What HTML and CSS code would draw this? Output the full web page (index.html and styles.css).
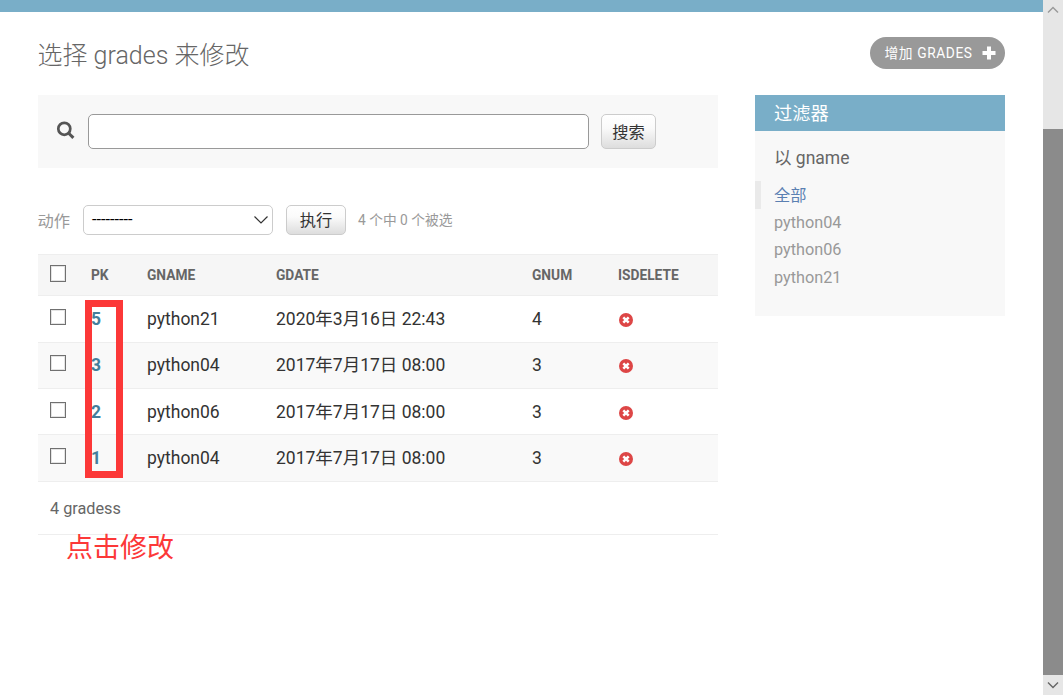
FILE: index.html
```html
<!DOCTYPE html>
<html lang="zh-Hans">
<head>
  <meta charset="UTF-8" />
  <title>选择 grades 来修改</title>
  <link rel="stylesheet" href="styles.css">
</head>
<body>
  <svg class="sprite">
    <symbol id="icon-no" viewBox="0 0 14 14">
      <circle cx="7" cy="7" r="7" fill="#dd4646"/>
      <path d="M4.3 4.3l5.4 5.4M9.7 4.3l-5.4 5.4" stroke="#fff" stroke-width="2.5"/>
    </symbol>
  </svg>
  <div class="page">
    <div class="main">
      <div class="breadcrumbs"></div>
      <div class="content">
        <div class="title-bar">
          <h1>选择 grades 来修改</h1>
          <a class="addlink">增加 GRADES
            <svg width="14" height="14" viewBox="0 0 14 14"><path d="M7 .5v13M.5 7h13" stroke="#fff" stroke-width="4"/></svg>
          </a>
        </div>
        <div class="columns">
          <div class="changelist">
            <form class="toolbar">
              <svg class="search-icon" width="20" height="20" viewBox="0 0 20 20" fill="none" stroke="#555">
                <circle cx="8.3" cy="7.8" r="6" stroke-width="2.7"/>
                <path d="M12.7 12.2l4.700 4.700" stroke-width="3"/>
              </svg>
              <input type="text" class="searchbar">
              <button type="button" class="button search-button">搜索</button>
            </form>
            <div class="actions">
              <label>动作</label>
              <div class="select">
                <span>---------</span>
                <svg width="16" height="10" viewBox="0 0 16 10"><path d="M1.5 1.5L8 8l6.500-6.500" fill="none" stroke="#333" stroke-width="1.2"/></svg>
              </div>
              <button type="button" class="button go-button">执行</button>
              <span class="counter">4 个中 0 个被选</span>
            </div>
            <div class="results">
              <div class="row head">
                <span><input type="checkbox"></span><span>PK</span><span>GNAME</span><span>GDATE</span><span>GNUM</span><span>ISDELETE</span>
              </div>
              <div class="row tall">
                <span><input type="checkbox"></span><a>5</a><span>python21</span><span class="date">2020年3月16日 22:43</span><span>4</span><span><svg class="no"><use href="#icon-no"/></svg></span>
              </div>
              <div class="row alt">
                <span><input type="checkbox"></span><a>3</a><span>python04</span><span class="date">2017年7月17日 08:00</span><span>3</span><span><svg class="no"><use href="#icon-no"/></svg></span>
              </div>
              <div class="row">
                <span><input type="checkbox"></span><a>2</a><span>python06</span><span class="date">2017年7月17日 08:00</span><span>3</span><span><svg class="no"><use href="#icon-no"/></svg></span>
              </div>
              <div class="row alt tall">
                <span><input type="checkbox"></span><a>1</a><span>python04</span><span class="date">2017年7月17日 08:00</span><span>3</span><span><svg class="no"><use href="#icon-no"/></svg></span>
              </div>
              <div class="mark-box"></div>
            </div>
            <div class="paginator">4 gradess
              <div class="mark-text">点击修改</div>
            </div>
          </div>
          <div class="filter">
            <h2>过滤器</h2>
            <h3>以 gname</h3>
            <ul>
              <li class="selected">全部</li>
              <li>python04</li>
              <li>python06</li>
              <li>python21</li>
            </ul>
          </div>
        </div>
      </div>
    </div>
    <div class="scrollbar">
      <svg class="arrow-up" width="12" height="8" viewBox="0 0 12 8"><path d="M1 6.500l5-5 5 5" fill="none" stroke="#999" stroke-width="1.4"/></svg>
      <div class="thumb"></div>
      <svg class="arrow-down" width="12" height="8" viewBox="0 0 12 8"><path d="M1 1.500l5 5 5-5" fill="none" stroke="#666" stroke-width="1.4"/></svg>
    </div>
  </div>
</body>
</html>
```

FILE: styles.css
```css
* {
  box-sizing: border-box;
}
body {
  margin: 0;
  font-family: Roboto, "Noto Sans CJK SC", sans-serif;
  font-size: 17.5px;
  color: #333;
  background: #fff;
}
.sprite {
  display: none;
}
.page {
  display: flex;
  height: 695px;
  overflow: hidden;
}
.main {
  flex: 1;
}
.breadcrumbs {
  height: 12px;
  background: #79aec8;
}
.content {
  padding: 25px 38px;
}
.title-bar {
  display: flex;
  justify-content: space-between;
  height: 58px;
}
h1 {
  margin: 0 0 0 -0.5px;
  font-size: 25px;
  font-weight: 300;
  line-height: 37px;
  color: #666;
}
.addlink {
  display: flex;
  align-items: center;
  justify-content: space-between;
  width: 135px;
  height: 32px;
  padding: 0 9px 1px 14.5px;
  border-radius: 16px;
  background: #999;
  color: #fff;
  font-size: 13.75px;
  line-height: 30px;
  letter-spacing: 0.6px;
  white-space: nowrap;
}
.columns {
  display: flex;
  justify-content: space-between;
  align-items: flex-start;
}
.changelist {
  width: 680px;
}
.toolbar {
  display: flex;
  align-items: center;
  height: 73px;
  padding-left: 18px;
  background: #f8f8f8;
}
.search-icon {
  margin: -1px 12px 0 0;
}
.searchbar {
  width: 501px;
  height: 35px;
  border: 1px solid #999;
  border-radius: 5px;
  background: #fff;
}
.button {
  border: 1px solid #ccc;
  border-radius: 5px;
  background: linear-gradient(#fff, #fafafa 40%, #ddd);
  color: #333;
  padding: 0 0 2px;
  font-family: inherit;
  font-size: 16.25px;
}
.search-button {
  width: 55px;
  height: 35px;
  margin-left: 12px;
}
.actions {
  display: flex;
  align-items: center;
  height: 30px;
  margin: 37px 0 19px;
  color: #999;
  font-size: 16.25px;
}
.actions label {
  width: 32px;
  margin: -1px 0 0 -0.5px;
  white-space: nowrap;
}
.select {
  display: flex;
  justify-content: space-between;
  width: 190px;
  height: 30px;
  margin-left: 13.5px;
  padding: 0 3px 0 8px;
  border: 1px solid #ccc;
  border-radius: 5px;
  color: #000;
  line-height: 27px;
}
.select svg {
  margin-top: 9px;
}
.go-button {
  width: 60px;
  height: 30px;
  margin: 0 12px 0 13px;
}
.counter {
  margin-top: -2px;
  font-size: 13.75px;
}
.results {
  position: relative;
  border-top: 1px solid #eee;
}
.row {
  display: grid;
  grid-template-columns: 41px 56px 129px 256px 86px 1fr;
  align-items: center;
  height: 46px;
  padding-left: 12px;
  border-bottom: 1px solid #eee;
  white-space: nowrap;
}
.row.tall {
  height: 47px;
}
.row.head {
  height: 41px;
  background: #f6f6f6;
  color: #666;
  font-size: 13.75px;
  font-weight: 700;
}
.row.alt {
  padding-bottom: 1px;
  background: #f9f9f9;
}
.row a {
  color: #447e9b;
  font-weight: 700;
}
.row .date {
  margin-top: -3px;
}
input[type="checkbox"] {
  appearance: none;
  display: block;
  width: 16px;
  height: 16px;
  margin: -4px 0 0;
  border: 1px solid #707070;
  background: #fff;
  box-shadow: inset 0 0 0 1px #e4e4e4;
}
.head input[type="checkbox"] {
  height: 17px;
  margin-top: -3px;
}
.no {
  display: block;
  width: 14px;
  height: 14px;
  margin: 2px 0 0 0.7px;
}
.mark-box {
  position: absolute;
  left: 47px;
  top: 45px;
  width: 38px;
  height: 178px;
  border: 7px solid #fc3838;
}
.paginator {
  position: relative;
  height: 53px;
  padding-left: 12px;
  border-bottom: 1px solid #eee;
  color: #666;
  font-size: 16.25px;
  line-height: 53px;
}
.mark-text {
  position: absolute;
  left: 28px;
  top: 46px;
  color: #fc3838;
  font-size: 27px;
  line-height: 40px;
}
.filter {
  width: 250px;
  height: 221px;
  background: #f8f8f8;
}
.filter h2 {
  height: 36px;
  margin: 0;
  padding-left: 19px;
  background: #79aec8;
  color: #fff;
  font-size: 18.2px;
  font-weight: 400;
  line-height: 38px;
}
.filter h3 {
  margin: 12px 0 8px;
  padding-left: 19px;
  color: #666;
  font-size: 17.5px;
  font-weight: 400;
  line-height: 30px;
}
.filter ul {
  margin: 0;
  padding: 0;
  list-style: none;
}
.filter li {
  height: 27.5px;
  padding-left: 19px;
  color: #999;
  font-size: 16.25px;
  line-height: 27.5px;
}
.filter li.selected {
  padding-left: 13px;
  border-left: 6px solid #eaeaea;
  color: #5b80b2;
  line-height: 29px;
}
.scrollbar {
  display: flex;
  flex-direction: column;
  align-items: center;
  width: 20px;
  background: #e6e6e6;
}
.arrow-up {
  margin: 6px 0 115px;
}
.thumb {
  width: 20px;
  height: 546px;
  background: #8b8b8b;
}
.arrow-down {
  margin-top: 6px;
}
```
